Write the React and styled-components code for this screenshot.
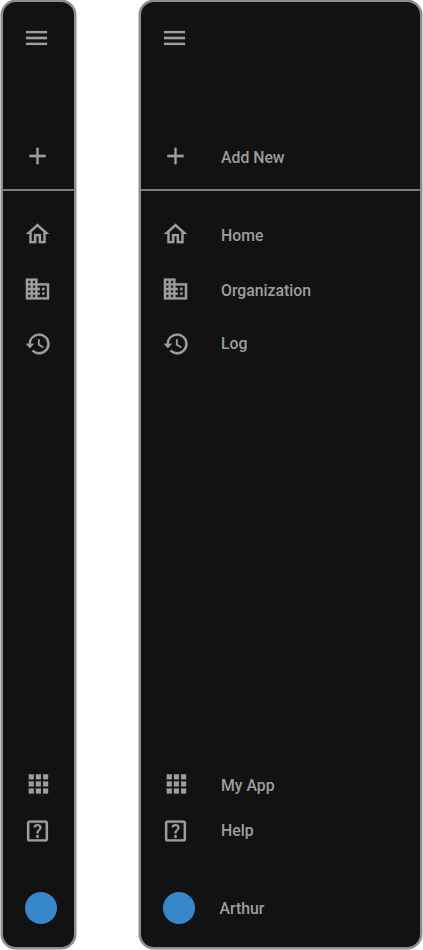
import React from "react";
import styled, { createGlobalStyle } from "styled-components";
import {
  MdMenu,
  MdAdd,
  MdOutlineHome,
  MdDomain,
  MdOutlineHelpCenter,
} from "react-icons/md";

const GlobalStyle = createGlobalStyle`
  *, *::before, *::after { box-sizing: border-box; }
  body { margin: 0; background: #ffffff; }
`;

const Page = styled.main`
  display: flex;
  justify-content: space-between;
  width: 423px;
  height: 950px;
  padding: 0 1px 1px;
  font-family: Roboto, "Liberation Sans", sans-serif;
`;

const Panel = styled.nav`
  display: flex;
  flex-direction: column;
  width: ${(p) => (p.$expanded ? "283px" : "75px")};
  height: 949px;
  background: #121212;
  border: 2px solid #8e8e8e;
  border-radius: 15px;
  box-shadow: 0 0 0 0.5px #8e8e8e;
  overflow: hidden;
`;

const Header = styled.header`
  display: flex;
  flex-direction: column;
  justify-content: space-between;
  height: 189px;
  padding: 22px 0 19px;
  border-bottom: 2px solid #7c7c7c;
`;

const NavList = styled.div`
  display: flex;
  flex-direction: column;
  padding-top: 29px;
`;

const Footer = styled.footer`
  display: flex;
  flex-direction: column;
  margin-top: auto;
  padding-bottom: 25px;
`;

const Item = styled.a`
  display: grid;
  grid-template-columns: 68px 1fr;
  align-items: center;
  height: 28px;
  margin-bottom: ${(p) => p.$gap || 0}px;
  color: #9e9e9e;
`;

const IconSlot = styled.span`
  display: flex;
  padding-left: ${(p) => p.$inset}px;

  svg {
    display: block;
    flex: none;
    width: 28px;
    height: 28px;
    transform: translateX(0.5px);
    stroke: currentColor;
    stroke-width: 0.15px;
  }

  path[fill="none"] {
    stroke: none;
  }
`;

const Label = styled.span`
  padding-left: ${(p) => p.$inset || 12}px;
  padding-top: ${(p) => (p.$shift || 0) * 2}px;
  font-size: 15.8px;
  font-weight: 500;
  line-height: 20px;
  white-space: nowrap;
`;

const Avatar = styled.span`
  flex: none;
  width: 32.4px;
  height: 32.4px;
  margin: -2px 0;
  border-radius: 50%;
  background: #3688cb;
`;

function HistoryIcon() {
  return (
    <svg viewBox="0 0 24 24" fill="currentColor">
      <path d="M13.3 3a9 9 0 0 0-9 8.7H1.9l3.6 3.9 3.6-3.9H6.3a7 7 0 1 1 2.1 5.2L7 18.3A9 9 0 1 0 13.3 3z" />
      <path d="M12.4 8v5l4.2 2.5.75-1.25-3.45-2.05V8z" />
    </svg>
  );
}

function AppsIcon() {
  const steps = [3.7, 9.8, 15.9];
  return (
    <svg viewBox="0 0 24 24" fill="currentColor">
      {steps.map((y) =>
        steps.map((x) => <rect key={`${x}-${y}`} x={x} y={y} width="4.3" height="4.3" />)
      )}
    </svg>
  );
}

const mainItems = [
  { name: "Home", icon: MdOutlineHome, gap: 27, shift: 1.5 },
  { name: "Organization", icon: MdDomain, gap: 27, shift: 1.5 },
  { name: "Log", icon: HistoryIcon, gap: 0, shift: 0 },
];

const footerItems = [
  { name: "My App", icon: AppsIcon, inset: 21, gap: 19, shift: 1.5 },
  { name: "Help", icon: MdOutlineHelpCenter, gap: 49, shift: 0 },
];

function NavItem({ item, expanded }) {
  const Icon = item.icon;
  return (
    <Item $gap={item.gap}>
      <IconSlot $inset={item.inset || 20}>
        <Icon />
      </IconSlot>
      {expanded && <Label $shift={item.shift}>{item.name}</Label>}
    </Item>
  );
}

function Sidebar({ expanded }) {
  return (
    <Panel $expanded={expanded}>
      <Header>
        <NavItem item={{ icon: MdMenu, name: "", inset: 19 }} expanded={expanded} />
        <NavItem item={{ icon: MdAdd, name: "Add New", shift: 1.5 }} expanded={expanded} />
      </Header>
      <NavList>
        {mainItems.map((item) => (
          <NavItem key={item.name} item={item} expanded={expanded} />
        ))}
      </NavList>
      <Footer>
        {footerItems.map((item) => (
          <NavItem key={item.name} item={item} expanded={expanded} />
        ))}
        <Item>
          <IconSlot $inset={22}>
            <Avatar />
          </IconSlot>
          {expanded && <Label $inset={10.5} $shift={0.5}>Arthur</Label>}
        </Item>
      </Footer>
    </Panel>
  );
}

export default function App() {
  return (
    <>
      <GlobalStyle />
      <Page>
        <Sidebar expanded={false} />
        <Sidebar expanded />
      </Page>
    </>
  );
}
